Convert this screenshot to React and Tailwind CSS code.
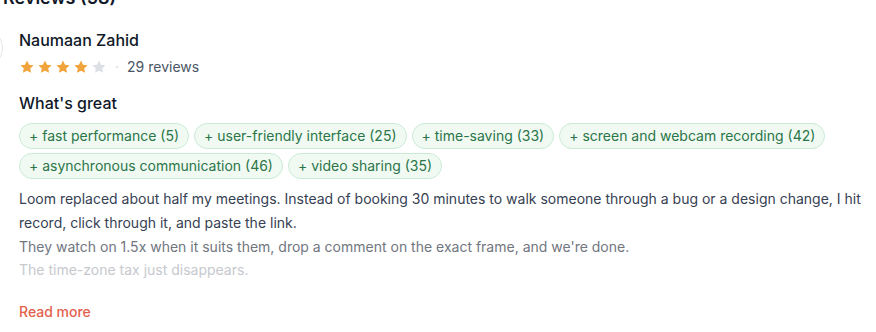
const TAGS = [
  { label: 'fast performance', count: 5 },
  { label: 'user-friendly interface', count: 25 },
  { label: 'time-saving', count: 33 },
  { label: 'screen and webcam recording', count: 42 },
  { label: 'asynchronous communication', count: 46 },
  { label: 'video sharing', count: 35 },
];

function Star({ filled }) {
  return (
    <svg viewBox="0 0 24 24" className={`w-4 h-4 ${filled ? 'text-[#f1a43c]' : 'text-[#dde1e6]'}`} fill="currentColor">
      <path d="M12 2.3l3 6.2 6.8.9-5 4.7 1.3 6.7L12 17.5l-6.1 3.3 1.3-6.7-5-4.7 6.8-.9z" />
    </svg>
  );
}

export default function App() {
  const rating = 4;

  return (
    <div className="w-[876px] h-[332px] overflow-hidden bg-white pl-[3px] pr-[4px] font-['Inter',sans-serif]">
      <h2 className="-mt-4 text-lg leading-7 font-semibold text-gray-900">Reviews (58)</h2>

      <div className="mt-4 ml-[-40px] flex gap-4">
        {/* avatar, mostly cropped */}
        <div className="w-10 h-10 shrink-0 rounded-full border border-gray-200 bg-white" />

        <div className="flex-1 min-w-0">
          <p className="text-base leading-6 font-medium text-gray-900">Naumaan Zahid</p>

          <div className="mt-[5px] flex items-center gap-2 h-5">
            <div className="flex gap-0.5">
              {[0, 1, 2, 3, 4].map((i) => (
                <Star key={i} filled={i < rating} />
              ))}
            </div>
            <span className="text-gray-300 text-sm">·</span>
            <span className="text-sm text-gray-600">29 reviews</span>
          </div>

          <p className="mt-[14px] text-base leading-6 font-medium text-gray-900">What's great</p>

          <div className="mt-2 flex flex-wrap gap-x-[5px] gap-y-1">
            {TAGS.map((t) => (
              <span
                key={t.label}
                className="px-[9px] py-[2px] rounded-full border border-[#c9ebd5] bg-[#f0faf3] text-sm leading-5 text-[#2b7548]"
              >
                + {t.label} ({t.count})
              </span>
            ))}
          </div>

          <div className="mt-2 text-sm leading-[1.7]">
            <p className="text-gray-700">
              Loom replaced about half my meetings. Instead of booking 30 minutes to walk someone through a bug or a design change, I hit record, click through it, and paste the link.
            </p>
            <p className="text-[#71767f]">They watch on 1.5x when it suits them, drop a comment on the exact frame, and we're done.</p>
            <p className="text-[#c6c9ce]">The time-zone tax just disappears.</p>
          </div>

          <button type="button" className="mt-5 text-sm leading-5 font-medium text-[#e35f4d]">
            Read more
          </button>
        </div>
      </div>
    </div>
  );
}
